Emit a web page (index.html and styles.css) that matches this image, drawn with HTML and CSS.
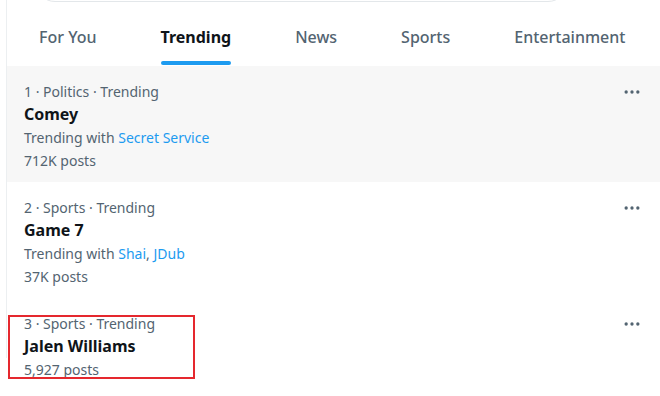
FILE: index.html
```html
<!DOCTYPE html>
<html>
<head>
<meta charset="utf-8">
<link rel="stylesheet" href="styles.css">
</head>
<body>
<div class="page">
  <div class="search"></div>
  <nav class="tabs">
    <div class="tab"><span class="label">For You</span></div>
    <div class="tab active"><span class="label">Trending</span><span class="bar"></span></div>
    <div class="tab"><span class="label">News</span></div>
    <div class="tab"><span class="label">Sports</span></div>
    <div class="tab"><span class="label">Entertainment</span></div>
  </nav>
  <div class="trend hover">
    <div class="info">
      <div class="meta">1 · Politics · Trending</div>
      <div class="title">Comey</div>
      <div class="with">Trending with <a class="link">Secret Service</a></div>
      <div class="posts">712K posts</div>
    </div>
    <div class="more"><svg viewBox="0 0 24 24" width="20" height="20"><circle cx="5" cy="12" r="2"/><circle cx="12" cy="12" r="2"/><circle cx="19" cy="12" r="2"/></svg></div>
  </div>
  <div class="trend">
    <div class="info">
      <div class="meta">2 · Sports · Trending</div>
      <div class="title">Game 7</div>
      <div class="with">Trending with <a class="link">Shai</a>, <a class="link tight">JDub</a></div>
      <div class="posts">37K posts</div>
    </div>
    <div class="more"><svg viewBox="0 0 24 24" width="20" height="20"><circle cx="5" cy="12" r="2"/><circle cx="12" cy="12" r="2"/><circle cx="19" cy="12" r="2"/></svg></div>
  </div>
  <div class="trend">
    <div class="info">
      <div class="meta">3 · Sports · Trending</div>
      <div class="title">Jalen Williams</div>
      <div class="posts">5,927 posts</div>
    </div>
    <div class="more"><svg viewBox="0 0 24 24" width="20" height="20"><circle cx="5" cy="12" r="2"/><circle cx="12" cy="12" r="2"/><circle cx="19" cy="12" r="2"/></svg></div>
  </div>
</div>
<div class="highlight"></div>
</body>
</html>
```
FILE: styles.css
```css
html, body {
  margin: 0;
  padding: 0;
  background: #ffffff;
  overflow: hidden;
}
body {
  font-family: "Noto Sans", "Open Sans", sans-serif;
  color: #0f1419;
  height: 396px;
}
.page {
  margin-left: 6px;
  border-left: 1px solid #eceff1;
  height: 396px;
}
.search {
  margin-top: -38px;
  margin-left: 28px;
  width: 531px;
  height: 38px;
  border: 1px solid #e3e7ea;
  border-radius: 999px;
}
.tabs {
  display: flex;
  height: 64px;
}
.tab {
  display: flex;
  flex-direction: column;
  align-items: center;
  flex-shrink: 0;
  padding: 0 32px;
  white-space: nowrap;
}
.label {
  padding-top: 25px;
  line-height: 20px;
  font-size: 16px;
  font-weight: 500;
  color: #536471;
}
.active .label {
  font-weight: 700;
  color: #0f1419;
}
.bar {
  margin-top: auto;
  margin-bottom: 1px;
  height: 4px;
  width: 100%;
  border-radius: 2px;
  background: #1d9bf0;
}
.trend {
  display: flex;
  justify-content: space-between;
  height: 116px;
  box-sizing: border-box;
  padding: 14px 18px 10px 17px;
}
.hover {
  background: #f7f7f7;
}
.info {
  display: flex;
  flex-direction: column;
}
.meta, .with, .posts {
  font-size: 14px;
  line-height: 23px;
  color: #536471;
}
.title {
  font-size: 16px;
  line-height: 23px;
  font-weight: 700;
  color: #0f1419;
}
.link {
  color: #1d9bf0;
  margin-left: 0;
}
.link.tight {
  margin-left: 0;
}
.more {
  height: 23px;
  display: flex;
  align-items: center;
}
.more svg {
  fill: #536471;
}
.highlight {
  position: absolute;
  left: 8px;
  top: 315px;
  width: 183px;
  height: 60px;
  border: 2px solid #e5282e;
}
```
